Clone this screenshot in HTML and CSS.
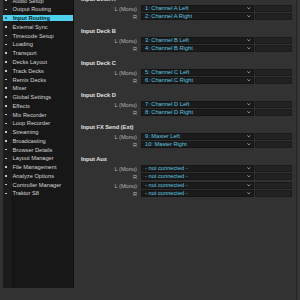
FILE: index.html
```html
<!DOCTYPE html>
<html>
<head>
<meta charset="utf-8">
<link rel="stylesheet" href="styles.css">
</head>
<body>
<div class="app">
  <nav class="sidebar">
    <ul class="nav">
      <li><i></i>Audio Setup</li>
      <li><i></i>Output Routing</li>
      <li class="active"><i></i>Input Routing</li>
      <li><i></i>External Sync</li>
      <li><i></i>Timecode Setup</li>
      <li><i></i>Loading</li>
      <li><i></i>Transport</li>
      <li><i></i>Decks Layout</li>
      <li><i></i>Track Decks</li>
      <li><i></i>Remix Decks</li>
      <li><i></i>Mixer</li>
      <li><i></i>Global Settings</li>
      <li><i></i>Effects</li>
      <li><i></i>Mix Recorder</li>
      <li><i></i>Loop Recorder</li>
      <li><i></i>Streaming</li>
      <li><i></i>Broadcasting</li>
      <li><i></i>Browser Details</li>
      <li><i></i>Layout Manager</li>
      <li><i></i>File Management</li>
      <li><i></i>Analyze Options</li>
      <li><i></i>Controller Manager</li>
      <li><i></i>Traktor S8</li>
    </ul>
  </nav>
  <main class="main">
    <section class="group">
      <h2>Input Deck A</h2>
      <div class="row"><span class="lbl">L (Mono)</span><div class="sel">1: Channel A Left<svg class="arr" viewBox="0 0 4 3"><polyline points="0.5,0.5 2,2.2 3.5,0.5"/></svg></div><div class="ext"></div></div>
      <div class="row"><span class="lbl">R</span><div class="sel">2: Channel A Right<svg class="arr" viewBox="0 0 4 3"><polyline points="0.5,0.5 2,2.2 3.5,0.5"/></svg></div><div class="ext"></div></div>
    </section>
    <section class="group">
      <h2>Input Deck B</h2>
      <div class="row"><span class="lbl">L (Mono)</span><div class="sel">3: Channel B Left<svg class="arr" viewBox="0 0 4 3"><polyline points="0.5,0.5 2,2.2 3.5,0.5"/></svg></div><div class="ext"></div></div>
      <div class="row"><span class="lbl">R</span><div class="sel">4: Channel B Right<svg class="arr" viewBox="0 0 4 3"><polyline points="0.5,0.5 2,2.2 3.5,0.5"/></svg></div><div class="ext"></div></div>
    </section>
    <section class="group">
      <h2>Input Deck C</h2>
      <div class="row"><span class="lbl">L (Mono)</span><div class="sel">5: Channel C Left<svg class="arr" viewBox="0 0 4 3"><polyline points="0.5,0.5 2,2.2 3.5,0.5"/></svg></div><div class="ext"></div></div>
      <div class="row"><span class="lbl">R</span><div class="sel">6: Channel C Right<svg class="arr" viewBox="0 0 4 3"><polyline points="0.5,0.5 2,2.2 3.5,0.5"/></svg></div><div class="ext"></div></div>
    </section>
    <section class="group">
      <h2>Input Deck D</h2>
      <div class="row"><span class="lbl">L (Mono)</span><div class="sel">7: Channel D Left<svg class="arr" viewBox="0 0 4 3"><polyline points="0.5,0.5 2,2.2 3.5,0.5"/></svg></div><div class="ext"></div></div>
      <div class="row"><span class="lbl">R</span><div class="sel">8: Channel D Right<svg class="arr" viewBox="0 0 4 3"><polyline points="0.5,0.5 2,2.2 3.5,0.5"/></svg></div><div class="ext"></div></div>
    </section>
    <section class="group">
      <h2>Input FX Send (Ext)</h2>
      <div class="row"><span class="lbl">L (Mono)</span><div class="sel">9: Master Left<svg class="arr" viewBox="0 0 4 3"><polyline points="0.5,0.5 2,2.2 3.5,0.5"/></svg></div><div class="ext"></div></div>
      <div class="row"><span class="lbl">R</span><div class="sel">10: Master Right<svg class="arr" viewBox="0 0 4 3"><polyline points="0.5,0.5 2,2.2 3.5,0.5"/></svg></div><div class="ext"></div></div>
    </section>
    <section class="group">
      <h2>Input Aux</h2>
      <div class="row"><span class="lbl">L (Mono)</span><div class="sel">- not connected -<svg class="arr" viewBox="0 0 4 3"><polyline points="0.5,0.5 2,2.2 3.5,0.5"/></svg></div><div class="ext"></div></div>
      <div class="row"><span class="lbl">R</span><div class="sel">- not connected -<svg class="arr" viewBox="0 0 4 3"><polyline points="0.5,0.5 2,2.2 3.5,0.5"/></svg></div><div class="ext"></div></div>
      <div class="row pair"><span class="lbl">L (Mono)</span><div class="sel">- not connected -<svg class="arr" viewBox="0 0 4 3"><polyline points="0.5,0.5 2,2.2 3.5,0.5"/></svg></div><div class="ext"></div></div>
      <div class="row"><span class="lbl">R</span><div class="sel">- not connected -<svg class="arr" viewBox="0 0 4 3"><polyline points="0.5,0.5 2,2.2 3.5,0.5"/></svg></div><div class="ext"></div></div>
    </section>
  </main>
  <div class="scroll"></div>
</div>
</body>
</html>
```
FILE: styles.css
```css
* { box-sizing: border-box; margin: 0; padding: 0; }
html, body {
  width: 300px;
  height: 300px;
  overflow: hidden;
  background: #323232;
  font-family: "Liberation Sans", Arial, sans-serif;
  font-size: 5.7px;
}
.app {
  display: flex;
  height: 300px;
  padding-left: 3px;
}
.sidebar {
  width: 71px;
  height: 288px;
  flex: none;
  overflow: hidden;
  background: linear-gradient(to right, #1c1c1c 0, #1c1c1c 9px, #121212 9px, #121212 10px, #171717 10px);
  border-right: 1px solid #0e0e0e;
}
.nav {
  list-style: none;
  margin-top: -2.4px;
}
.nav li {
  height: 6px;
  line-height: 6px;
  margin-bottom: 2.77px;
  display: flex;
  align-items: center;
  color: #d6d6d6;
  white-space: nowrap;
}
.nav li i {
  width: 1.6px;
  height: 1.6px;
  background: #c8c8c8;
  margin-left: 2.4px;
  margin-right: 5.6px;
  flex: none;
}
.nav li.active {
  background: #4fd2ee;
  color: #0a1a1e;
  font-weight: bold;
}
.nav li.active i {
  background: transparent;
  border: 0.6px solid #0a1a1e;
  width: 2px;
  height: 2px;
  border-radius: 50%;
}
.main {
  flex: 1;
  padding-left: 7px;
  margin-top: -6px;
}
.group {
  margin-bottom: 6px;
}
.group h2 {
  height: 10px;
  line-height: 10px;
  font-size: 5.7px;
  font-weight: bold;
  color: #e4e4e4;
  margin-bottom: 1px;
}
.row {
  display: flex;
  align-items: center;
  height: 7px;
  margin-bottom: 1px;
}
.row.pair { margin-top: 2px; }
.lbl {
  width: 56px;
  text-align: right;
  color: #b4b4b4;
  padding-right: 0;
}
.sel {
  margin-left: 4px;
  width: 113px;
  height: 7px;
  line-height: 7px;
  background: #1b1b1b;
  border: 0.5px solid #141414;
  color: #5cc6e4;
  padding-left: 3px;
  display: flex;
  align-items: center;
  justify-content: space-between;
  padding-right: 2.5px;
}
.arr {
  width: 3.5px;
  height: 2.6px;
  fill: none;
  stroke: #bdbdbd;
  stroke-width: 0.9;
}
.ext {
  margin-left: 1px;
  width: 37px;
  height: 7px;
  background: #222222;
  border: 0.5px solid #1a1a1a;
}
.scroll {
  width: 4px;
  flex: none;
  border-left: 1px solid #262626;
  background: #353535;
}
```
